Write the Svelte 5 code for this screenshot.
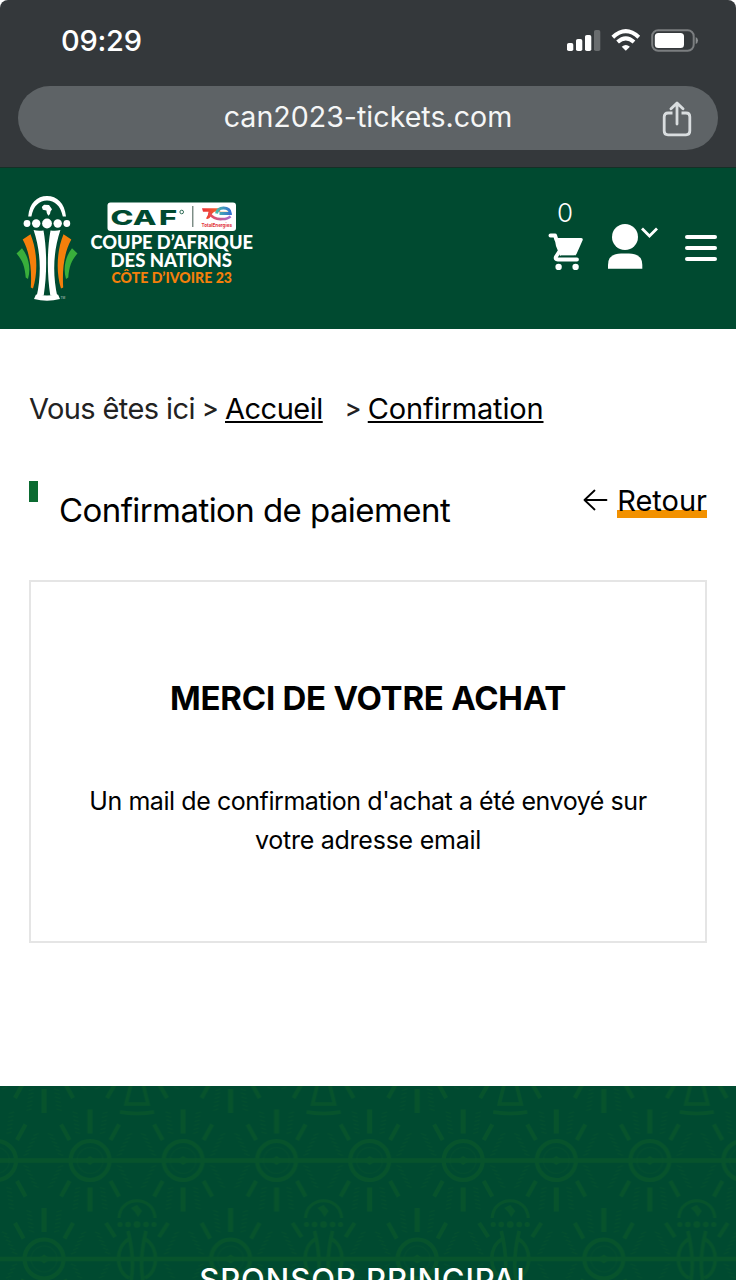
<script>
  const sides = [-1, 1];
  const ticks = [0, 1, 2, 3, 4, 5];
  const suns = [
    { x: -3.5, y: 74.5 }, { x: 90, y: 74.5 }, { x: 183.1, y: 74.5 },
    { x: 44, y: -24 }, { x: 44, y: 173 }
  ];
  const cups = [{ x: 137, y: -24 }, { x: 137, y: 173 }];
</script>

<div class="screen">
  <div class="browser">
    <div class="status">
      <span class="time">09:29</span>
      <svg class="indicators" width="136" height="26" viewBox="0 0 136 26">
        <g fill="#fff">
          <rect x="1" y="15" width="6.3" height="8" rx="1.8" />
          <rect x="10" y="11" width="6.3" height="12" rx="1.8" />
          <rect x="19" y="7" width="6.3" height="16" rx="1.8" />
          <rect x="28" y="2" width="6.3" height="21" rx="1.8" fill="#696c6e" />
          <path d="M59.8 22.8 L55.7 18.7 Q59.8 15.4 63.9 18.7Z" />
        </g>
        <path d="M46.8 9.2 Q59.8 -3 72.8 9.2 M51.6 14.1 Q59.8 6.7 68 14.1" fill="none" stroke="#fff" stroke-width="4" />
        <rect x="86.2" y="2.2" width="41.5" height="20.5" rx="6" fill="none" stroke="#7b7e80" stroke-width="2" />
        <rect x="88.8" y="5" width="29.2" height="15" rx="3.5" fill="#fff" />
        <path d="M129.7 9 Q132 10 132 12.5 T129.7 16Z" fill="#898c8e" />
      </svg>
    </div>
    <div class="address">
      <span class="url">can2023-tickets.com</span>
      <svg class="share" width="30" height="36" viewBox="0 0 30 36" fill="none" stroke="#d9dddf" stroke-width="2.8">
        <path d="M10.5 12H6Q2.2 12 2.2 15.8V30Q2.2 33.8 6 33.8H24Q27.8 33.8 27.8 30V15.8Q27.8 12 24 12H19.5" />
        <path d="M15 23V2.5M9 7.8L15 1.9L21 7.8" stroke-linecap="round" stroke-linejoin="round" />
      </svg>
    </div>
  </div>

  <header>
    <svg class="logo" width="246" height="112" viewBox="12 192 246 112">
      <defs>
        <linearGradient id="warm"><stop offset="0" stop-color="#ec3038" /><stop offset=".6" stop-color="#f0622f" /><stop offset="1" stop-color="#f5b12c" /></linearGradient>
        <linearGradient id="cool"><stop offset="0" stop-color="#4bb8a9" /><stop offset="1" stop-color="#3473cf" /></linearGradient>
        <linearGradient id="rose"><stop offset="0" stop-color="#ed4650" /><stop offset="1" stop-color="#a56bd0" /></linearGradient>
      </defs>
      <g fill="#fff">
        <path d="M28.2 216.5 C29.5 203 37 196 47 196 C57 196 64.7 203 66 216.5 L62.8 216.5 C60.5 205.5 54.5 200.5 47 200.5 C39.5 200.5 33.5 205.5 31.4 216.5Z" />
        <circle cx="27" cy="223.5" r="3.4" /><circle cx="36.2" cy="223.5" r="4.2" />
        <circle cx="47" cy="223.5" r="4.9" /><circle cx="57.7" cy="223.5" r="4.2" />
        <circle cx="66.8" cy="223.5" r="3.4" />
        <path d="M41.8 207 L44 204.8 L49 205 L52 209.2 L50.5 211.5 L50 214 L48.3 215.8 L46.8 213 L46.4 210.5 L42.8 209.8Z" />
        <path d="M33.6 230 Q37.5 231.3 43.5 230.5 C47 250 47 275 43.7 295.5 L36.5 297 C41.5 275 41 252 33.6 230Z" />
        <path d="M60.4 230 Q56.5 231.3 50.5 230.5 C47 250 47 275 50.3 295.5 L57.5 297 C52.5 275 53 252 60.4 230Z" />
        <path d="M36 294.5 Q47 296.5 58 294.5 L60 299 Q47 302.5 34 299Z" />
      </g>
      <g fill="#f57f0b">
        <path d="M22.7 239.5 L30.5 234.2 C37.5 251 38 273 33 288.5 L30.8 287.5 C32 268 29.5 252 22.7 239.5Z" />
        <path d="M71.3 239.5 L63.5 234.2 C56.5 251 56 273 61 288.5 L63.2 287.5 C62 268 64.5 252 71.3 239.5Z" />
      </g>
      <g fill="#39ae3b">
        <path d="M16.5 253.5 L22 248.2 C29 257 31 269 28 279 L25.7 277.5 C25 267 22.5 260 16.5 253.5Z" />
        <path d="M77.500 253.500 L72 248.200 C65 257 63 269 66 279 L68.300 277.500 C69 267 71.500 260 77.500 253.500Z" />
      </g>
      <text x="60.5" y="299" font-size="3" fill="#c6d4cd">TM</text>
      <rect x="107.5" y="202.5" width="128.5" height="28.5" rx="3" fill="#fff" />
      <text transform="translate(0 224.6) scale(1.5 1)" x="73.6 88.5 106" y="0" font-size="20.6" font-weight="800" fill="#004a30">CAF</text>
      <circle cx="181.7" cy="212" r="1.8" fill="none" stroke="#004a30" stroke-width=".8" />
      <path d="M192.8 206V227" stroke="#52675e" stroke-width="1.1" />
      <path d="M202 208.300H218Q221 209 220 213.500L228 214.200V211.800L216 211.500Q212.500 211.500 211 216Q209 220 206 218.500Q208.500 215 208.500 211.800H203Z" fill="url(#warm)" />
      <path d="M216.5 213.500Q217.500 208 223.500 208Q229.800 208 230.300 213.400H219.500" fill="none" stroke="url(#cool)" stroke-width="3" />
      <path d="M209 213Q214 220 222.500 219Q228 219 230.500 216.300" fill="none" stroke="url(#rose)" stroke-width="2.6" />
      <text x="201.5" y="227.200" font-size="5.3" font-weight="700" fill="#e2343d" textLength="30.5" lengthAdjust="spacingAndGlyphs">TotalEnergies</text>
      <g class="wordmark">
        <text x="90.5" y="248.5" font-size="18.3" fill="#fff" textLength="162.5" lengthAdjust="spacingAndGlyphs">COUPE D’AFRIQUE</text>
        <text x="110.5" y="266.8" font-size="18.3" fill="#fff" textLength="121.5" lengthAdjust="spacingAndGlyphs">DES NATIONS</text>
        <text x="111.5" y="282.8" font-size="14.8" fill="#f57f0b" textLength="120.5" lengthAdjust="spacingAndGlyphs">CÔTE D’IVOIRE 23</text>
      </g>
    </svg>

    <nav>
      <div class="cart">
        <span>0</span>
        <svg width="36" height="38" viewBox="0 0 36 38">
          <path d="M2.500 3.400H7L8.500 8" fill="none" stroke="#fff" stroke-width="4" stroke-linecap="round" stroke-linejoin="round" />
          <path d="M6.500 6H33Q35.500 6 34.500 8.500L28.500 22Q27.500 24 25.500 24H12L8 14Z" fill="#fff" />
          <path d="M11 20L7.800 25Q7 27.500 9.700 27.500H29" fill="none" stroke="#fff" stroke-width="3.800" stroke-linecap="round" stroke-linejoin="round" />
          <path d="M12.500 24H27" stroke="#004a30" stroke-width="1.300" />
          <circle cx="10.600" cy="35" r="3.200" fill="#fff" /><circle cx="27.600" cy="35" r="3.200" fill="#fff" />
        </svg>
      </div>
      <svg class="user" width="52" height="48" viewBox="0 0 52 48">
        <circle cx="18" cy="14" r="13" fill="#fff" />
        <path d="M1 45.700V42Q1 30.500 14 30.500H22Q35.300 30.500 35.300 42V45.700Z" fill="#fff" />
        <path d="M35 5.500L42.500 13L50 5.500" fill="none" stroke="#fff" stroke-width="2.800" />
      </svg>
      <div class="burger"><i></i><i></i><i></i></div>
    </nav>
  </header>

  <main>
    <div class="crumbs">
      <span class="here">Vous êtes ici</span><b>&gt;</b><a class="home" href="#accueil">Accueil</a><b class="second">&gt;</b><a class="current" href="#confirmation">Confirmation</a>
    </div>
    <div class="heading">
      <i class="mark"></i>
      <h1>Confirmation de paiement</h1>
      <a class="back" href="#retour">
        <svg width="25" height="22" viewBox="0 0 25 22" fill="none" stroke="#000" stroke-width="1.800" stroke-linejoin="round" stroke-linecap="round"><path d="M11.500 1.500L1.500 11L11.500 20.500M1.500 11H23.500" /></svg>
        <span>Retour</span>
      </a>
    </div>
    <section>
      <h2>MERCI DE VOTRE ACHAT</h2>
      <p>Un mail de confirmation d'achat a été envoyé sur<br /><span>votre adresse email</span></p>
    </section>
  </main>

  <footer>
    <svg class="motif" width="736" height="194" viewBox="0 0 736 194">
      <defs>
        <g id="sun" fill="none" stroke="#07532c">
          <circle r="19.500" stroke-width="4" />
          <circle r="13" stroke-width="1" opacity=".4" />
          <path d="M-6 0L0 -4.500L6 0L0 4.500Z" fill="#07532c" stroke="none" />
          <path d="M0 -51V-27M0 27V51" stroke-width="5" />
          <path d="M20.500 -20.500L29 -36M-20.500 -20.500L-29 -36M20.500 20.500L29 36M-20.500 20.500L-29 36" stroke-width="4" />
          {#each sides as sx}
            {#each sides as sy}
              <g transform="scale({sx} {sy})" stroke-width="1" opacity=".5">
                {#each ticks as t}
                  <path d="M{10 + t * .5} {-27 - t * 4}L{15 + t * .5} {-28.5 - t * 4}" />
                  <path d="M{27 + t * 2} {-5 - t * 4}L{32 + t * 2} {-7 - t * 4}" />
                {/each}
              </g>
            {/each}
          {/each}
        </g>
        <g id="cup" fill="none" stroke="#07532c">
          <path d="M-18 -41C-17 -64 17 -64 18 -41" stroke-width="3" />
          <path d="M-6 -51L0 -54L5 -48L1 -42L-2 -47Z" fill="#07532c" stroke="none" />
          <g fill="#07532c" stroke="none"><circle cx="-17" cy="-34.500" r="2.500" /><circle cx="-9" cy="-34.500" r="2.800" /><circle cy="-34.500" r="3.300" /><circle cx="9" cy="-34.500" r="2.800" /><circle cx="17" cy="-34.500" r="2.500" /></g>
          <path d="M-9 -28Q-2 0 -6 22L-11 42H11L6 22Q2 0 9 -28" stroke-width="3.500" />
          <path d="M-8 -20C-22 -12 -22 12 -8 19M8 -20C22 -12 22 12 8 19M-17 50Q0 53 17 50" stroke-width="3.500" />
          <path d="M-22 -22L-31 -36M22 -22L31 -36M22 22L30 36M-22 22L-30 36" stroke-width="4" />
          {#each sides as sx}
            {#each sides as sy}
              <g transform="scale({sx} {sy})" stroke-width="1" opacity=".5">
                {#each ticks as t}<path d="M{27 + t * 2} {-5 - t * 4}L{32 + t * 2} {-7 - t * 4}" />{/each}
              </g>
            {/each}
          {/each}
        </g>
        <pattern id="cloth" width="186.600" height="194" patternUnits="userSpaceOnUse">
          <path d="M0 74.500H187M0 173H187" stroke="#07532c" stroke-width="4.500" />
          {#each suns as s}<use href="#sun" x={s.x} y={s.y} />{/each}
          {#each cups as c}<use href="#cup" x={c.x} y={c.y} />{/each}
        </pattern>
      </defs>
      <rect width="736" height="194" fill="url(#cloth)" />
    </svg>
    <h3>SPONSOR PRINCIPAL</h3>
  </footer>
</div>

<style>
  :global(body) { background: #fff; }
  .screen { width: 736px; height: 1280px; overflow: hidden; display: flex; flex-direction: column; background: #fff; font-family: Inter, "Liberation Sans", sans-serif; color: #000; border-radius: 8px 8px 0 0; }
  .browser { box-sizing: border-box; height: 168px; flex: none; background: #34383b; border-bottom: 1px solid #152f26; padding: 0 18px; }
  .status { height: 86px; display: flex; justify-content: space-between; align-items: flex-start; padding: 28px 16px 0 43px; box-sizing: border-box; }
  .time { color: #fff; font-size: 29px; line-height: 26px; font-weight: 500; letter-spacing: -.25px; }
  .address { height: 64px; border-radius: 32px; background: #5e6366; display: grid; grid-template-columns: 1fr auto 1fr; align-items: center; }
  .url { grid-column: 2; font-size: 28.6px; line-height: 62px; height: 64px; color: #f5f6f6; }
  .share { justify-self: end; margin-right: 26px; margin-top: 2px; }
  header { flex: none; height: 161px; box-sizing: border-box; background: #004a30; display: flex; justify-content: space-between; align-items: flex-start; padding: 24px 19px 0 12px; }
  .logo { font-family: Inter, sans-serif; }
  .wordmark { font-family: Lato, sans-serif; font-weight: 900; }
  nav { display: flex; color: #fff; align-items: flex-start; }
  .cart { width: 36px; margin-right: 23px; padding-top: 6px; display: flex; flex-direction: column; align-items: center; }
  .cart span { font-size: 26px; line-height: 30px; height: 34px; font-weight: 350; margin-right: 4px; }
  .cart svg { margin-left: -2px; }
  .user { margin: 31px 26px 0 -1px; }
  .burger { width: 32px; padding-top: 43px; display: grid; gap: 7px; }
  .burger i { height: 4px; background: #fff; border-radius: 2px; }
  main { flex: none; height: 757px; box-sizing: border-box; padding: 60px 29px 0; }
  .crumbs { height: 38px; display: flex; align-items: center; font-size: 29px; color: #222; white-space: nowrap; }
  .here { width: 166px; letter-spacing: -.6px; }
  .crumbs b { font-weight: 500; font-size: 25px; width: 16px; margin-left: 7px; margin-right: 7px; }
  .crumbs .second { margin-left: 22px; }
  .home { letter-spacing: -.5px; }
  .current { letter-spacing: -.15px; }
  a { color: #000; }
  .crumbs a { text-decoration-thickness: 2px; text-underline-offset: 2px; text-decoration-skip-ink: none; }
  .heading { display: flex; align-items: flex-start; padding-top: 54px; height: 153px; box-sizing: border-box; }
  .mark { width: 9px; height: 21px; background: #0b6b31; }
  h1 { margin: 9px 0 0 21px; font-weight: 400; font-size: 33px; line-height: 40px; letter-spacing: -.57px; white-space: nowrap; }
  .back { margin-left: auto; display: flex; text-decoration: none; font-size: 29px; line-height: 34px; padding-top: 3px; }
  .back svg { margin: 5px 9px 0 0; }
  .back span { background: linear-gradient(#f29100, #f29100) 0 26px / 100% 8px no-repeat; }
  section { box-sizing: border-box; height: 363px; border: 2px solid #e5e5e5; padding-top: 95px; text-align: center; }
  h2 { margin: 0; font-size: 33px; line-height: 42px; font-weight: 700; letter-spacing: -.25px; }
  p { margin: 63px 0 0; font-size: 25px; line-height: 39px; letter-spacing: -.44px; white-space: nowrap; }
  p span { letter-spacing: -.25px; }
  footer { flex: none; height: 194px; background: #004a30; display: grid; overflow: hidden; }
  .motif { grid-area: 1 / 1; }
  h3 { grid-area: 1 / 1; margin: 176px 2px 0 0; text-align: center; color: #fff; font-size: 31px; line-height: 36px; font-weight: 500; letter-spacing: .95px; }
</style>
